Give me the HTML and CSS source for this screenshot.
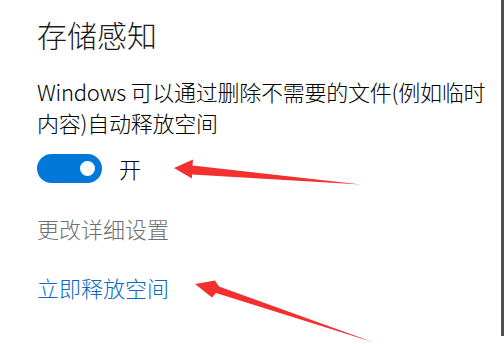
FILE: index.html
```html
<!DOCTYPE html>
<html lang="zh-CN">
<head>
<meta charset="utf-8">
<title>存储感知</title>
<link rel="stylesheet" href="styles.css">
</head>
<body>
<div class="page">
  <main class="panel">
    <h1 class="title">存储感知</h1>
    <p class="desc">
      <span class="line">Windows 可以通过删除不需要的文件(例如临时</span>
      <span class="line">内容)自动释放空间</span>
    </p>
    <div class="toggle-row">
      <span class="toggle"><span class="knob"></span></span>
      <span class="toggle-label">开</span>
    </div>
    <div class="settings">更改详细设置</div>
    <div class="link">立即释放空间</div>
  </main>
  <div class="edge"></div>
  <svg class="arrows" width="504" height="344" viewBox="0 0 504 344">
    <polygon points="174,168 193,159.5 192.5,165.5 361,184.5 192,174.5 192,178.5" fill="#f2302f"/>
    <polygon points="195,284 215,280.5 219,286.5 374,342.5 216,293 212,297.5" fill="#f2302f"/>
  </svg>
</div>
</body>
</html>
```
FILE: styles.css
```css
html, body {
  margin: 0;
  padding: 0;
  background: #ffffff;
}
body {
  font-family: "Noto Sans CJK SC", "Noto Sans", sans-serif;
  font-weight: 300;
  color: #000000;
}
.page {
  position: relative;
  width: 504px;
  height: 344px;
  display: flex;
  overflow: hidden;
}
.panel {
  width: 496px;
  padding: 14px 0 0 37px;
  box-sizing: border-box;
}
.title {
  margin: 0;
  font-size: 30px;
  line-height: 40px;
  font-weight: 300;
  color: #1a1a1a;
}
.desc {
  margin: 22px 0 0;
  font-size: 22px;
  line-height: 31px;
  letter-spacing: -0.25px;
}
.line {
  display: block;
  white-space: nowrap;
}
.toggle-row {
  display: flex;
  align-items: center;
  gap: 17px;
  margin-top: 16px;
  height: 29px;
}
.toggle {
  display: flex;
  align-items: center;
  justify-content: flex-end;
  width: 65px;
  height: 29px;
  border-radius: 15px;
  background: #0078d7;
  padding-right: 7px;
  box-sizing: border-box;
}
.knob {
  width: 15px;
  height: 15px;
  border-radius: 50%;
  background: #ffffff;
}
.toggle-label {
  font-size: 22px;
  line-height: 29px;
}
.settings {
  margin-top: 30px;
  font-size: 22px;
  line-height: 31px;
  color: #707070;
}
.link {
  margin-top: 28px;
  font-size: 22px;
  line-height: 31px;
  color: #0a6abf;
}
.edge {
  margin-left: auto;
  width: 3px;
  height: 336px;
  background: #4f4f4f;
}
.arrows {
  position: absolute;
  left: 0;
  top: 0;
  pointer-events: none;
}
```
